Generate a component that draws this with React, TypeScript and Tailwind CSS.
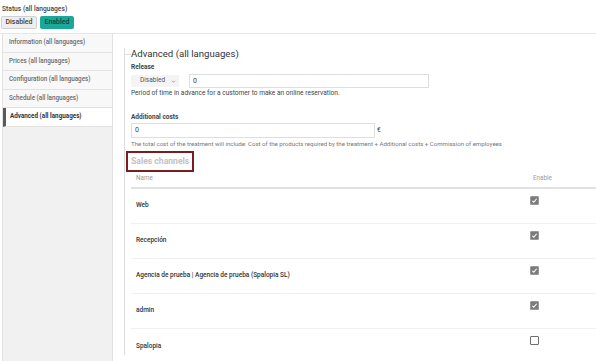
import React from 'react';

const tabs = [
  'Information (all languages)',
  'Prices (all languages)',
  'Configuration (all languages)',
  'Schedule (all languages)',
  'Advanced (all languages)',
];

const channels = [
  { name: 'Web', enabled: true },
  { name: 'Recepción', enabled: true },
  { name: 'Agencia de prueba | Agencia de prueba (Spalopia SL)', enabled: true },
  { name: 'admin', enabled: true },
  { name: 'Spalopia', enabled: false },
];

function Check({ on }: { on: boolean }) {
  if (!on) {
    return <div className="w-[9px] h-[9px] border border-[#6f6f6f] rounded-[1px] bg-white" />;
  }
  return (
    <div className="w-[9px] h-[9px] rounded-[1px] bg-[#7b7b7b] border border-[#9a9a9a] flex items-center justify-center">
      <svg viewBox="0 0 10 10" className="w-[7px] h-[7px]">
        <path d="M2 5.5 L4 7.5 L8 2.5" fill="none" stroke="#fff" strokeWidth="1.6" />
      </svg>
    </div>
  );
}

export default function App() {
  return (
    <div className="w-[596px] h-[361px] overflow-hidden bg-white text-[#444] font-['Roboto',sans-serif]">
      {/* status */}
      <div className="pl-[2px] pt-[5px] h-[33px]">
        <div className="text-[6.7px] leading-[8px] font-medium text-[#444]">Status (all languages)</div>
        <div className="flex gap-[3px] mt-[3px] -ml-px">
          <button className="h-[13px] w-[36px] border border-[#d0d0d0] bg-[#eeeeee] rounded-[2px] text-[7px] font-medium text-[#444]">
            Disabled
          </button>
          <button className="h-[13px] w-[34px] bg-[#1aa89b] rounded-[2px] text-[7px] font-medium text-[#173f3b]">
            Enabled
          </button>
        </div>
      </div>

      <div className="flex border-t border-[#e6e6e6] h-[328px]">
        {/* tabs */}
        <div className="ml-[2px] w-[111px] bg-[#f1f1f1] border-x border-[#e2e2e2] flex flex-col">
          {tabs.map((t, i) =>
            i === 4 ? (
              <div
                key={t}
                className="h-[18.5px] flex items-center pl-[4px] bg-white border-l-[3px] border-[#5a5a5a] border-b border-b-[#e2e2e2] text-[6.3px] font-bold text-[#333]"
              >
                {t}
              </div>
            ) : (
              <div
                key={t}
                className="h-[18.5px] flex items-center pl-[6px] bg-[#f8f8f8] border-b border-[#e2e2e2] text-[6.3px] font-medium text-[#6b6b6b]"
              >
                {t}
              </div>
            )
          )}
        </div>

        {/* main */}
        <div className="flex-1 pl-[11px] pt-[20px]">
          <div className="border-l border-[#dcdcdc] h-full">
            <div className="-mt-[6px] flex items-center">
              <div className="w-[6px] h-px bg-[#dcdcdc]" />
              <span className="text-[9.6px] leading-[12px] text-[#333]">Advanced (all languages)</span>
            </div>

            <div className="pl-[6px]">
              <div className="mt-[3px] text-[6.5px] leading-[8px] font-bold text-[#444]">Release</div>
              <div className="flex items-center mt-[3px]">
                <div className="w-[48px] h-[12px] bg-[#f4f4f4] flex items-center pl-[9px] text-[6.5px] text-[#555]">
                  Disabled
                  <svg viewBox="0 0 10 10" className="w-[5px] h-[5px] ml-[6px]">
                    <path d="M2 3.5 L5 6.5 L8 3.5" fill="none" stroke="#666" strokeWidth="1.2" />
                  </svg>
                </div>
                <div className="ml-[10px] w-[240px] h-[14px] border border-[#dedede] flex items-center pl-[3px] text-[7px] text-[#444]">
                  0
                </div>
              </div>
              <div className="mt-[1px] text-[6.6px] leading-[8px] text-[#444]">
                Period of time in advance for a customer to make an online reservation.
              </div>

              <div className="mt-[16px] text-[6.5px] leading-[8px] font-bold text-[#444]">Additional costs</div>
              <div className="flex items-center mt-[2px]">
                <div className="w-[244px] h-[15px] border border-[#dedede] flex items-center pl-[3px] text-[7px] text-[#444]">
                  0
                </div>
                <span className="ml-[2px] text-[6.5px] text-[#444]">€</span>
              </div>
              <div className="mt-[2px] text-[6.1px] leading-[8px] text-[#777]">
                The total cost of the treatment will include: Cost of the products required by the treatment + Additional costs + Commission of employees
              </div>

              <div className="-ml-[5px] mt-[3px] w-[68px] h-[21px] border-2 border-[#7a1d21] flex items-center pl-[3px] text-[8.6px] font-bold text-[#c2c2c2]">
                Sales channels
              </div>

              {/* table */}
              <div className="mt-[1px]">
                <div className="flex h-[16px] border-b-2 border-[#e0e0e0] text-[6.3px] text-[#9a9a9a]">
                  <div className="flex-1 pl-[5px] pt-[1px]">Name</div>
                  <div className="w-[63px] pt-[1px]">Enable</div>
                </div>
                {channels.map((c, i) => (
                  <div
                    key={c.name}
                    className={`flex h-[35px] ${i < channels.length - 1 ? 'border-b border-[#f0f0f0]' : ''}`}
                  >
                    <div className="flex-1 pl-[5px] flex items-center text-[6.5px] font-medium text-[#333]">{c.name}</div>
                    <div className="w-[66px] pt-[7px]">
                      <Check on={c.enabled} />
                    </div>
                  </div>
                ))}
              </div>
            </div>
          </div>
        </div>
      </div>
    </div>
  );
}
